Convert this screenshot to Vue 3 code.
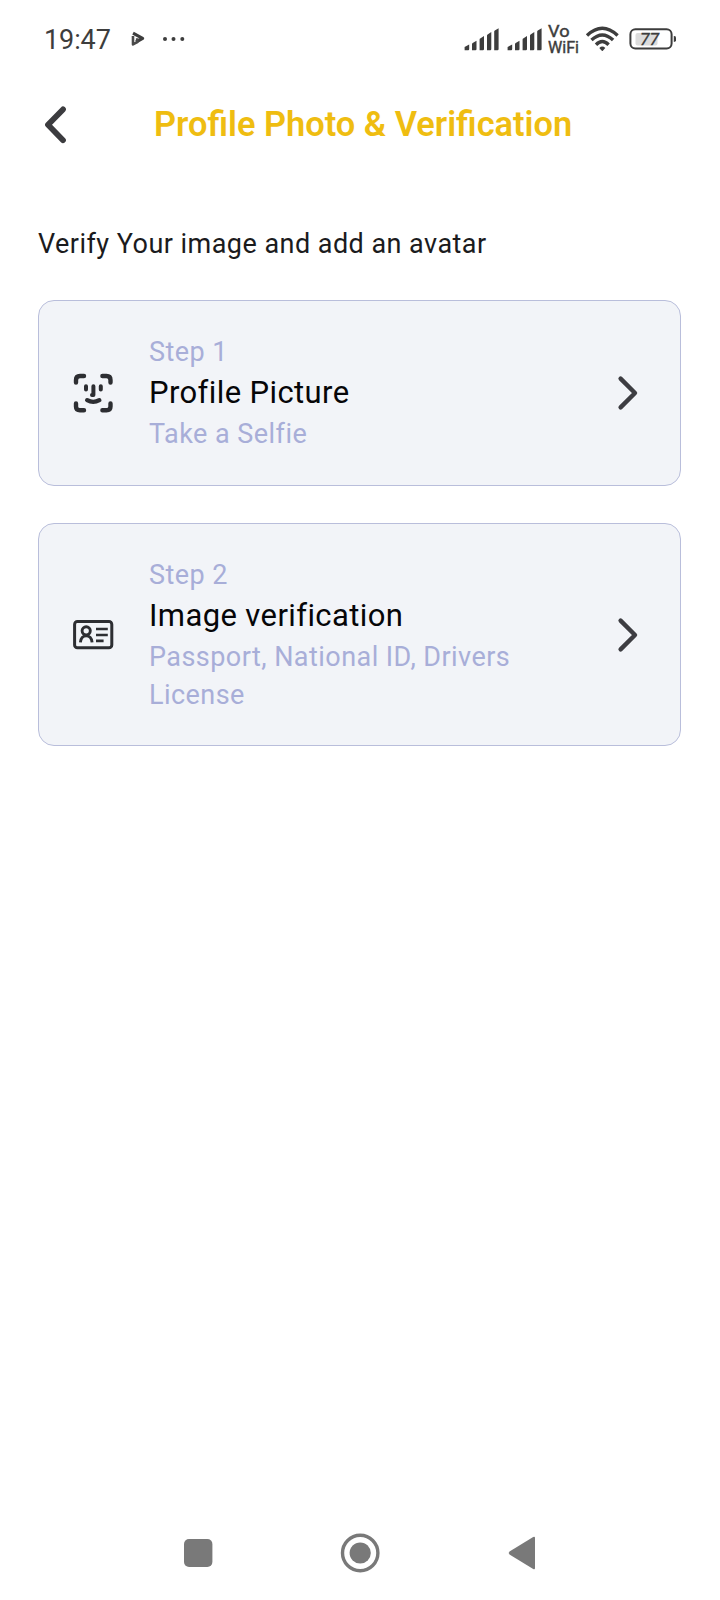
<script setup>
const steps = [
  { icon: 'face', step: 'Step 1', title: 'Profile Picture', detail: 'Take a Selfie' },
  { icon: 'card', step: 'Step 2', title: 'Image verification', detail: 'Passport, National ID, Drivers License' },
]
</script>

<template>
  <div class="screen">
    <div class="status">
      <span class="time">19:47</span>
      <svg class="play" width="14" height="16" viewBox="0 0 14 16">
        <path d="M2 2.2 11.6 7.4 5 11" fill="none" stroke="#3d3d3d" stroke-width="3.2" stroke-linejoin="round" />
        <path d="M2 5V13.4L6.2 11.2V7.2" fill="none" stroke="#4a4a4a" stroke-width="2.6" stroke-linejoin="round" />
      </svg>
      <svg class="dots" width="24" height="6" viewBox="0 0 24 6" fill="#3d3d3d">
        <circle cx="3" cy="3" r="2" /><circle cx="11.5" cy="3" r="2" /><circle cx="20.3" cy="3" r="2" />
      </svg>
      <svg class="radio" width="230" height="40" viewBox="450 18.5 230 40">
        <g v-for="x in [0, 43]" :key="x" :transform="`translate(${x} 0)`" fill="#3d3d3d">
          <path d="M464.6 49.8V46.5L469.2 44V48.6Q469.2 49.8 468.2 49.8Z" />
          <path d="M472 49.8V43.4Q472 42.8 472.7 42.4L476.5 40.3V48.6Q476.5 49.8 475.4 49.8Z" />
          <path d="M479.6 49.8V38.9Q479.6 38.3 480.2 38L484 35.5V48.6Q484 49.8 482.9 49.8Z" />
          <path d="M487 49.8V35Q487 34.3 487.6 34L491.3 31.6V48.6Q491.3 49.8 490.2 49.8Z" />
          <path d="M494.2 49.8V31Q494.2 30.3 494.8 30L498.6 27.7V48.6Q498.6 49.8 497.5 49.8Z" />
        </g>
        <g class="vowifi" fill="#3d3d3d" stroke="#3d3d3d" stroke-width="0.4">
          <text x="548" y="36.6" textLength="21.5" lengthAdjust="spacingAndGlyphs">Vo</text>
          <text x="548" y="52" textLength="31" lengthAdjust="spacingAndGlyphs">WiFi</text>
        </g>
        <g fill="none" stroke="#3d3d3d" stroke-width="3.4">
          <path d="M587 34.9Q602.3 20.5 617.6 34.9" />
          <path d="M591.5 39.6Q602.3 29.4 613.1 39.6" />
          <path d="M596 44.2Q602.3 37.9 608.6 44.2" />
        </g>
        <path d="M599.3 47.4Q602.3 44.5 605.3 47.4L602.8 50.2Q602.3 50.7 601.8 50.2Z" fill="#3d3d3d" />
        <rect x="635.5" y="32.5" width="22" height="12.5" rx="2" fill="#dcdcdc" />
        <rect x="630.4" y="28.8" width="41.2" height="19.2" rx="5" fill="none" stroke="#3d3d3d" stroke-width="2" />
        <path d="M673.8 35.6Q676 35.6 676 37V40Q676 41.4 673.8 41.4Z" fill="#3d3d3d" />
        <text class="battery" x="640" y="44.6" fill="#3d3d3d" stroke="#3d3d3d" stroke-width="0.3" textLength="19" lengthAdjust="spacingAndGlyphs">77</text>
      </svg>
    </div>

    <header class="header">
      <svg class="back" width="26" height="40" viewBox="0 0 26 40">
        <path d="M21 4.4 6 19.8 21 35.2" fill="none" stroke="#3c3c3f" stroke-width="5.8" stroke-linecap="round" stroke-linejoin="round" />
      </svg>
      <h1>Profile Photo &amp; Verification</h1>
    </header>

    <main>
      <p class="intro">Verify Your image and add an avatar</p>
      <section v-for="s in steps" :key="s.step" class="card">
        <svg v-if="s.icon === 'face'" class="icon" width="42" height="42" viewBox="0 0 42 42" fill="none" stroke="#2d2e32" stroke-width="4.4" stroke-linecap="round" stroke-linejoin="round">
          <path d="M4 10.5V8Q4 4 8 4H12M30.4 4H34.5Q38.5 4 38.5 8V10.5M38.5 31.5V34.5Q38.5 38.2 34.5 38.2H30.4M12 38.2H8Q4 38.2 4 34.5V31.5" />
          <path d="M14 14.2V17.4M28.8 14.2V17.4M21.4 14.2V23H20" stroke-width="4" />
          <path d="M15.2 28.2Q21.2 31.6 27.3 28.2" />
        </svg>
        <svg v-else class="icon" width="42" height="42" viewBox="0 0 42 42" fill="none" stroke="#2d2e32">
          <rect x="2.6" y="7.6" width="37.2" height="26.2" rx="2.8" stroke-width="3" />
          <circle cx="14.2" cy="16.8" r="4.1" stroke-width="2.9" />
          <path d="M8.4 28.4C8.8 24.5 11 21.9 14.2 21.9S19.7 24.5 20.1 28.4" stroke-width="2.9" />
          <path d="M24 15H35.8M24 21H35.8M24 26.9H31.6" stroke-width="2.7" />
        </svg>
        <div class="copy">
          <div class="sub">{{ s.step }}</div>
          <div class="title">{{ s.title }}</div>
          <div class="sub">{{ s.detail }}</div>
        </div>
        <svg class="chevron" width="24" height="38" viewBox="0 0 24 38">
          <path d="M4.6 4.6 19 19 4.6 33.4" fill="none" stroke="#3d3d42" stroke-width="4.4" stroke-linecap="round" stroke-linejoin="round" />
        </svg>
      </section>
    </main>

    <nav class="nav">
      <svg width="364" height="44" viewBox="178 1531 364 44" fill="#797979">
        <rect x="184" y="1539" width="28.4" height="28" rx="5" />
        <circle cx="360.2" cy="1553" r="17.7" fill="none" stroke="#797979" stroke-width="3.4" />
        <circle cx="360.2" cy="1553" r="10.6" />
        <path d="M509.5 1554.5Q508 1553 509.5 1551.5L533.2 1537Q535 1536.2 535 1538V1568Q535 1570 533.2 1569Z" />
      </svg>
    </nav>
  </div>
</template>

<style>
body { background: #fff; }
</style>

<style scoped>
.screen {
  box-sizing: border-box;
  width: 720px;
  height: 1600px;
  display: flex;
  flex-direction: column;
  background: #fff;
  font-family: Roboto, "Liberation Sans", sans-serif;
}
.status {
  height: 78px;
  display: flex;
  align-items: center;
  padding: 0 40px 0 44px;
}
.time {
  font-size: 27px;
  line-height: 32px;
  padding-top: 2px;
  width: 67px;
  color: #3d3d3d;
  letter-spacing: -0.1px;
}
.play { margin-left: 20px; }
.dots { margin-left: 17px; }
.radio { margin-left: auto; }
.vowifi { font: 400 16px Roboto, sans-serif; }
.battery { font: italic 400 16.5px Roboto, sans-serif; }
.header {
  height: 92px;
  display: flex;
  align-items: center;
  padding-left: 42px;
}
.back { margin-top: 1px; }
h1 {
  margin: 0 0 0 86px;
  color: #efbd11;
  font-size: 34.4px;
  line-height: 40px;
  font-weight: 600;
  white-space: nowrap;
}
main { padding: 55px 39px 0 38px; flex: 1; }
.intro {
  margin: 0 0 37px;
  color: #1b1b1d;
  font-size: 27px;
  line-height: 38px;
  letter-spacing: 0.46px;
}
.card {
  box-sizing: border-box;
  display: flex;
  align-items: center;
  padding: 32px 40px 31.5px 33px;
  margin-bottom: 37px;
  border: 1px solid #b9bedb;
  border-radius: 16px;
  background: #f2f4f8;
}
.icon { flex: none; }
.copy { width: 410px; margin-left: 35px; }
.sub {
  color: #a8aed8;
  font-size: 27px;
  line-height: 38px;
  letter-spacing: 0.45px;
}
.title {
  color: #060608;
  font-size: 31px;
  line-height: 44px;
  letter-spacing: 0.39px;
}
.chevron { margin-left: auto; flex: none; }
.nav { height: 69px; display: flex; justify-content: center; align-items: flex-start; }
</style>
